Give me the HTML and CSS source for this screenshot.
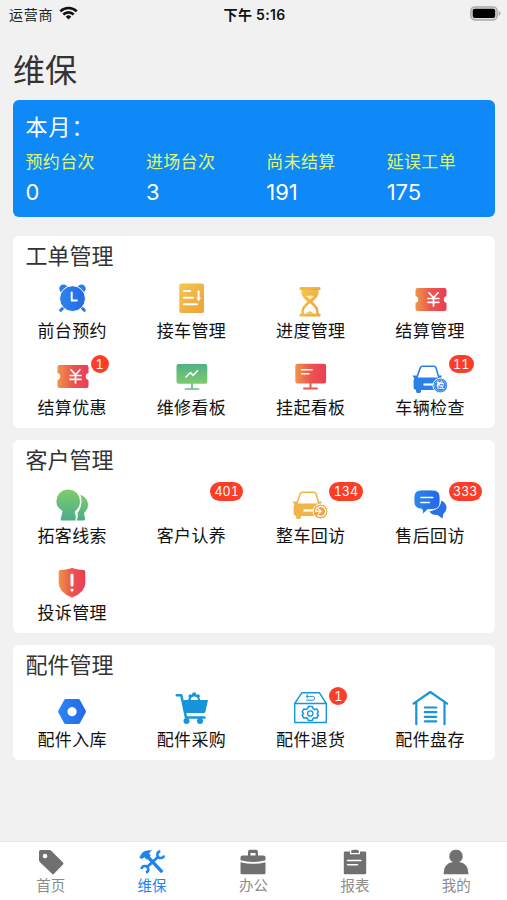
FILE: index.html
```html
<!DOCTYPE html>
<html lang="zh-CN">
<head>
<meta charset="utf-8">
<title>维保</title>
<link rel="stylesheet" href="styles.css">
</head>
<body>
<svg class="defs" aria-hidden="true">
  <defs>
    <linearGradient id="blue" x1="0" y1="0" x2="1" y2="0"><stop offset="0" stop-color="#2b86ee"/><stop offset="1" stop-color="#2468e8"/></linearGradient>
    <linearGradient id="gold" x1="0" y1="0" x2="1" y2="1"><stop offset="0" stop-color="#f5c64c"/><stop offset="1" stop-color="#eda13c"/></linearGradient>
    <linearGradient id="red" x1="0" y1="0" x2="1" y2="0"><stop offset="0" stop-color="#f0944a"/><stop offset=".5" stop-color="#ec5450"/><stop offset="1" stop-color="#e83e56"/></linearGradient>
    <linearGradient id="green" x1="0" y1="0" x2="0" y2="1"><stop offset="0" stop-color="#51b184"/><stop offset="1" stop-color="#7dcb6c"/></linearGradient>
    <linearGradient id="leaf" x1="0" y1="0" x2="0" y2="1"><stop offset="0" stop-color="#80cd6c"/><stop offset="1" stop-color="#4bad87"/></linearGradient>
    <symbol id="ticket" viewBox="0 0 48 44">
      <path fill="url(#red)" d="M11.5 14h27q2 0 2 2v6a3.6 3.6 0 0 0 0 7v6q0 2-2 2h-27q-2 0-2-2v-6a3.6 3.6 0 0 0 0-7v-6q0-2 2-2z"/>
      <path class="line-white" stroke-width="1.7" d="M23 18.7l4.5 5 4.5-5M27.5 24v8M22 24.5h11M22 28.3h11"/>
    </symbol>
    <symbol id="car" viewBox="0 0 48 44">
      <path d="M10.7 26l3.6-10.2q.6-1.600 2.200-1.600h11.400q1.500 0 2.100 1.600L33 26" fill="none" stroke="currentColor" stroke-width="1.600"/>
      <path d="M9 25.500H35.500V38H15v1q0 2-1.500 2h-2Q10 41 10 39v-1.200q-2.400 0-2.400-2.300V29q0-3 1.400-3.500z" fill="currentColor"/>
      <path d="M6.500 23.500h4.500v2.800H8.300zM36 23.500h-4v2.800h2.600z" fill="currentColor"/>
      <path d="M17.500 32.500h12" stroke="#fff" stroke-width="2.200"/>
    </symbol>
  </defs>
</svg>

<header class="status">
  <div class="carrier">运营商
    <svg width="19" height="14" viewBox="0 0 19 14"><g fill="none" stroke="#111" stroke-width="2.600"><path d="M1.300 5.400a11.700 11.700 0 0 1 16.400 0M4.300 8.500a7.400 7.400 0 0 1 10.400 0"/></g><path d="M9.500 13.500L6.700 10.700a4 4 0 0 1 5.600 0z" fill="#111"/></svg>
  </div>
  <div class="clock">下午 5:16</div>
  <svg class="battery" width="31" height="15" viewBox="0 0 31 15"><rect x=".9" y=".9" width="26.200" height="13" rx="4" fill="#dcdcdc" stroke="#aaa" stroke-width="1.500"/><rect x="2.700" y="2.800" width="22.500" height="9.200" rx="2" fill="#000"/><path d="M28.600 5.100q2 .5 2 2.300t-2 2.300z" fill="#aaa"/></svg>
</header>

<main>
  <h1>维保</h1>

  <section class="summary">
    <h2>本月：</h2>
    <dl>
      <div><dt>预约台次</dt><dd>0</dd></div>
      <div><dt>进场台次</dt><dd>3</dd></div>
      <div><dt>尚未结算</dt><dd>191</dd></div>
      <div><dt>延误工单</dt><dd>175</dd></div>
    </dl>
  </section>

  <section class="card">
    <h2>工单管理</h2>
    <div class="grid">
      <a class="item"><svg class="icon" viewBox="0 0 48 44">
        <g fill="#2a7cec"><circle cx="15.500" cy="14.800" r="4.200"/><circle cx="33.500" cy="14.800" r="4.200"/></g>
        <path d="M16.500 32.500l-3.800 3.800M32.500 32.500l3.800 3.800" stroke="#2877e8" stroke-width="3" stroke-linecap="round"/>
        <circle cx="24.500" cy="24.600" r="12.900" fill="url(#blue)" stroke="#fff" stroke-width="1"/>
        <path class="line-white" stroke-width="2" d="M23.700 18.500v8h5.200"/></svg><span>前台预约</span></a>
      <a class="item"><svg class="icon" viewBox="0 0 48 44">
        <rect x="12.300" y="9.500" width="24.700" height="29.500" rx="2" fill="url(#gold)"/>
        <path class="line-white" stroke-width="2" d="M17 17h6.200M17 23.700h9M17 30.300h13M31.600 17.300v7.500"/><path d="M29.200 23.500h4.800l-2.400 4z" fill="#fff"/></svg><span>接车管理</span></a>
      <a class="item"><svg class="icon" viewBox="0 0 48 44">
        <g fill="url(#gold)"><rect x="13.500" y="13" width="21" height="3" rx="1"/><rect x="13.500" y="39.500" width="21" height="3" rx="1"/><path d="M15.500 16h17v3q0 3.500-6 8.700 6 5 6 9V40h-17v-3.300q0-4 6-9-6-5.200-6-8.700z"/></g>
        <path d="M17.800 39.800v-2.600q0-3.200 6.200-8 6.200 4.800 6.200 8v2.600z" fill="#fff"/><path d="M19.300 39.800l4.700-2.800 4.700 2.800z" fill="#f1bd63"/><path d="M20 22q4-1 8 0l-4 3.700z" fill="#fbeac0"/></svg><span>进度管理</span></a>
      <a class="item"><svg class="icon"><use href="#ticket"/></svg><span>结算管理</span></a>
      <a class="item"><svg class="icon"><use href="#ticket"/></svg><span>结算优惠</span><b class="badge">1</b></a>
      <a class="item"><svg class="icon" viewBox="0 0 48 44">
        <rect x="9.500" y="13" width="30.800" height="19.800" rx="2" fill="url(#green)"/><path d="M25 32.500V38M18.500 38h13" stroke="#69bd7d" stroke-width="1.700" stroke-linecap="round"/>
        <path class="line-white" stroke-width="1.600" d="M19 26l4.500-4.500 2.500 3 4.500-4.700"/></svg><span>维修看板</span></a>
      <a class="item"><svg class="icon" viewBox="0 0 48 44">
        <rect x="9.300" y="12.800" width="30.800" height="19.800" rx="2" fill="url(#red)"/><path d="M24.500 32.500v4.700M18 37.400h13" stroke="#ec5450" stroke-width="2" stroke-linecap="round"/>
        <path class="line-white" stroke-width="1.600" d="M15.500 18.700h10.500M15.500 22.700h7.500"/></svg><span>挂起看板</span></a>
      <a class="item"><svg class="icon car-blue" viewBox="0 0 48 44"><use href="#car" y="1"/>
        <circle cx="34.300" cy="34.500" r="7.400" fill="#2c7ee8" stroke="#fff"/><circle cx="34.300" cy="34.500" r="5.700" fill="none" stroke="#c4dcfa" stroke-width=".6"/>
        <text class="stamp" x="34.300" y="37.400">检</text></svg><span>车辆检查</span><b class="badge">11</b></a>
    </div>
  </section>

  <section class="card">
    <h2>客户管理</h2>
    <div class="grid">
      <a class="item"><svg class="icon" viewBox="0 0 48 44">
        <path fill="url(#leaf)" d="M32.500 15.500q7.500 3.500 7.500 10.500 0 4.500-4 8l1 5.500q.2 2-1.500 2h-7q2-4 1-7.500 6-8 3-18.500z"/>
        <path fill="url(#leaf)" stroke="#fff" stroke-width="1" d="M20.300 10a12.300 12.300 0 0 1 12.200 12.300q0 6.200-4.700 9.700-1 1 0 3.500t0 6.500h-14q-2-.2-1.500-2.500l1.800-7.500Q7.900 28.500 7.900 22.300A12.300 12.300 0 0 1 20.300 10z"/></svg><span>拓客线索</span></a>
      <a class="item"><svg class="icon"></svg><span>客户认养</span><b class="badge">401</b></a>
      <a class="item"><svg class="icon car-gold" viewBox="0 0 48 44"><use href="#car" y="-1"/>
        <circle cx="34.500" cy="32.500" r="7.400" fill="#eca647" stroke="#fff"/><path class="line-white" stroke-width="1.200" d="M29.800 31.300a5 5 0 1 1 1.700 5M29.500 32.300h5.500M32.500 30l2.600 2.300-2.600 2.400"/></svg><span>整车回访</span><b class="badge">134</b></a>
      <a class="item"><svg class="icon" viewBox="0 0 48 44">
        <path fill="#2970e7" d="M35.500 21.500q5 2.500 5 7.500 0 3.500-3.200 6l-.8 4.500-5-3.500q-6 .2-8-3.500Q33.500 31 35.500 21.500z"/>
        <path fill="url(#blue)" stroke="#fff" stroke-width=".8" d="M15.800 11h10.200q8 0 8 7v5.200q0 7.300-8 7.300h-4.500l-4.500 4.700-.8-4.900Q8 29.500 8 23v-5q0-7 7.800-7z"/>
        <path class="line-white" stroke-width="1.500" d="M14.800 18.500h12M14.800 23.500h8.500"/></svg><span>售后回访</span><b class="badge">333</b></a>
      <a class="item"><svg class="icon" viewBox="0 0 48 44">
        <path fill="url(#red)" d="M24 12q6 2 11.800 2 1.500 0 1.500 1.500V27q0 9.500-13.300 14.500Q10.700 36.500 10.700 27V15.500q0-1.500 1.500-1.500Q18 14 24 12z"/>
        <path class="line-white" stroke-width="3" d="M24 19v10M24 34v.1"/></svg><span>投诉管理</span></a>
    </div>
  </section>

  <section class="card">
    <h2>配件管理</h2>
    <div class="grid">
      <a class="item"><svg class="icon" viewBox="0 0 48 44">
        <path fill="url(#blue)" fill-rule="evenodd" d="M17.700 16h12.700q1 0 1.500.9l5.800 10.600q.5 1 0 2l-5.800 10.700q-.5.800-1.500.800H17.700q-1 0-1.500-.8l-5.800-10.700q-.5-1 0-2l5.800-10.600q.5-.9 1.500-.9zM24 24a4.600 4.600 0 1 0 .1 0z"/></svg><span>配件入库</span></a>
      <a class="item"><svg class="icon sky" viewBox="0 0 48 44">
        <path class="line" stroke-width="2.500" d="M9.800 12.200h4.500L19 34.500h18.500"/>
        <path fill="currentColor" d="M15.500 17h5.500l1.200-2.500-1-1.500 2-2 1.600.9 1-2.400h2.800l1 2.400 1.600-.9 2 2-1 1.500 1.200 2.500H41l-2.500 11.500q-.5 1.500-2 1.500H18.300z"/><path d="M23.700 17a3.600 3.600 0 0 1 7.200 0z" fill="#fff"/>
        <circle cx="19.500" cy="38" r="3" fill="currentColor"/><circle cx="33" cy="38" r="3" fill="currentColor"/></svg><span>配件采购</span></a>
      <a class="item"><svg class="icon sky" viewBox="0 0 48 44">
        <path class="line" stroke-width="1.400" d="M8.700 20.500L16 9.700h17.300l7 10.800v19H8.700zM8.700 20.500h31.600"/>
        <path class="line" stroke-width="1" d="M20.500 17.200h6.500q1.800-.3 1.800-1.900t-2-1.900h-6.500M22 11.500l-2 1.900 2 1.900"/>
        <path class="line" stroke-width="1.500" d="M22.300 23.500h4l.8 2.200 1.500.8 2.300-.4 1.500 2.900-1.300 1.500 1.300 1.700-1.500 2.900-2.300-.4-1.500.8-.8 2h-4l-.8-2-1.500-.8-2.300.4-1.500-2.900 1.300-1.700-1.300-1.500 1.500-2.900 2.300.4 1.500-.8z"/><circle class="line" cx="24.300" cy="30.500" r="2.700" stroke-width="1.300"/></svg><span>配件退货</span><b class="badge">1</b></a>
      <a class="item"><svg class="icon sky" viewBox="0 0 48 44">
        <path class="line" stroke-width="2.200" d="M7.500 20.700L24.300 9l16.800 11.700M10.300 19.500v21.700M38.500 19.500v21.700M18.800 24.500h11.500M18.800 29.200h11.500M18.800 33.800h11.500M18.800 38.300h11.500"/></svg><span>配件盘存</span></a>
    </div>
  </section>
</main>

<nav>
  <a><svg viewBox="0 0 28 26"><path fill="currentColor" fill-rule="evenodd" d="M3.500 1h8.700q1.200 0 2 .8L26 13.500q1 1 0 2L17 24.700q-1 1-2 0L2.800 13Q2 12.200 2 11V2.500Q2 1 3.500 1zM8 4.700a2.300 2.300 0 1 0 .1 0z"/></svg><span>首页</span></a>
  <a class="active"><svg viewBox="0 0 28 26"><g fill="none" stroke="currentColor"><path d="M8.500 6.500L24.300 23.200" stroke-width="3.400"/><path d="M8.500 18.500L20.500 7.500" stroke-width="2.700"/><path d="M22.300 2.300a3.400 3.400 0 1 0 3.700 4.200M8 23.500a3.400 3.400 0 1 0-4.500-3.500" stroke-width="2.500"/></g><path fill="currentColor" d="M1.300 8.500l2.200-3.800Q7.500.5 14.500 1.600q-3.200 1-3.200 2.800l1.500 2.300-4 4-2.300-2.500-2.700 1.800z"/></svg><span>维保</span></a>
  <a><svg viewBox="0 0 28 26"><path fill="currentColor" fill-rule="evenodd" d="M9 6.500V3q0-2.200 2.200-2.200h5.600Q19 .8 19 3v3.500h5.500q2 0 2 2v2.800Q14 14.700 1.500 11.300V8.500q0-2 2-2zM11.500 6.500h5V4h-5zM1.500 13.200Q14 16.500 26.500 13.200V23.700q0 1.500-1.500 1.500H3q-1.500 0-1.500-1.500z"/></svg><span>办公</span></a>
  <a><svg viewBox="0 0 28 26"><path fill="currentColor" d="M4 2.500h5v2.700h10V2.500h5q1.200 0 1.200 1.200v20.300q0 1.200-1.200 1.200H4q-1.200 0-1.200-1.200V3.700Q2.800 2.500 4 2.500zM10.200 1.600l2-.9h3.600l2 .9v2.500h-7.600z"/><path class="line-white" stroke-width="1.500" d="M6.500 11.500h13.500M6.500 15.800h10"/></svg><span>报表</span></a>
  <a><svg viewBox="0 0 28 26"><path fill="currentColor" d="M14 .8a6.500 6.500 0 0 1 3.300 12.200Q26.500 14.500 26.500 25.200h-25Q1.500 14.500 10.700 13A6.500 6.500 0 0 1 14 .8z"/></svg><span>我的</span></a>
</nav>
</body>
</html>
```
FILE: styles.css
```css
* { box-sizing: border-box; margin: 0; padding: 0; }

body {
  height: 900px;
  display: flex;
  flex-direction: column;
  background: #f1f1f1;
  color: #111;
  font-family: Inter, "Noto Sans CJK SC", sans-serif;
  overflow: hidden;
}

.defs { position: absolute; width: 0; height: 0; }

.status {
  height: 28px;
  padding: 0 6px 0 9px;
  display: grid;
  grid-template-columns: 1fr auto 1fr;
  align-items: center;
  font-size: 14px;
}
.carrier { display: flex; align-items: center; gap: 6px; letter-spacing: .7px; color: #222; }
.carrier svg { margin-top: -2px; }
.clock { font-weight: 600; letter-spacing: .3px; padding-right: 1px; margin-top: -1px; }
.battery { justify-self: end; margin-top: -2px; }

main { flex: 1; padding: 0 12.5px 0 13px; }

h1 {
  height: 72px;
  padding-top: 21px;
  font-size: 32px;
  font-weight: 400;
  line-height: 44px;
  color: #333;
}

h2 { font-size: 22px; font-weight: 400; line-height: 30px; }

.summary {
  height: 116.5px;
  margin-bottom: 19px;
  padding: 12px 0 0 12.5px;
  border-radius: 6px;
  background: #0f88f8;
  color: #fff;
}
.summary h2 { letter-spacing: 1px; }
.summary dl { display: grid; grid-template-columns: repeat(4, 120.4px); margin-right: -20px; }
.summary dt { font-size: 17px; letter-spacing: .35px; line-height: 24px; margin-top: 8px; color: #e0f868; }
.summary dd { font-size: 22px; line-height: 30px; margin-top: 3px; }

.card {
  margin-bottom: 12px;
  border-radius: 6px;
  background: #fff;
}
.card h2 { height: 38.5px; padding: 5px 0 0 12.5px; color: #333; }

.grid { display: grid; grid-template-columns: repeat(4, 119.3px); }

.item {
  position: relative;
  height: 77px;
  display: flex;
  flex-direction: column;
  align-items: center;
}
.icon { width: 48px; height: 44px; margin-left: -1.5px; }
.item span { margin: 1px 0 0 -1px; font-size: 17px; letter-spacing: .35px; line-height: 25px; color: #111; }

.badge {
  position: absolute;
  left: calc(50% + 18px);
  top: 3.5px;
  min-width: 18px;
  height: 18.5px;
  padding: 1px 4.5px 0;
  border-radius: 10px;
  background: #fc3d27;
  color: #fff;
  font-size: 12.5px;
  font-weight: 400;
  line-height: 18px;
  font-variant-numeric: tabular-nums;
  text-align: center;
}

.line-white { fill: none; stroke: #fff; stroke-linecap: round; stroke-linejoin: round; }
.line { fill: none; stroke: currentColor; stroke-linecap: round; stroke-linejoin: round; }
.car-blue { color: #2b7fe9; }
.car-gold { color: #f0b548; }
.sky { color: #1795db; }
.stamp { font-size: 8px; font-weight: 700; fill: #fff; text-anchor: middle; }

nav {
  height: 59.5px;
  display: grid;
  grid-template-columns: repeat(5, 1fr);
  border-top: 1px solid #e8e8e8;
  background: #fff;
  color: #707070;
}
nav a { display: flex; flex-direction: column; align-items: center; padding-top: 7px; }
nav svg { width: 28px; height: 26px; }
nav span { margin-top: 1px; font-size: 14.5px; line-height: 20px; color: #8c8c8c; }
nav .active, nav .active span { color: #1b86ee; }
```
